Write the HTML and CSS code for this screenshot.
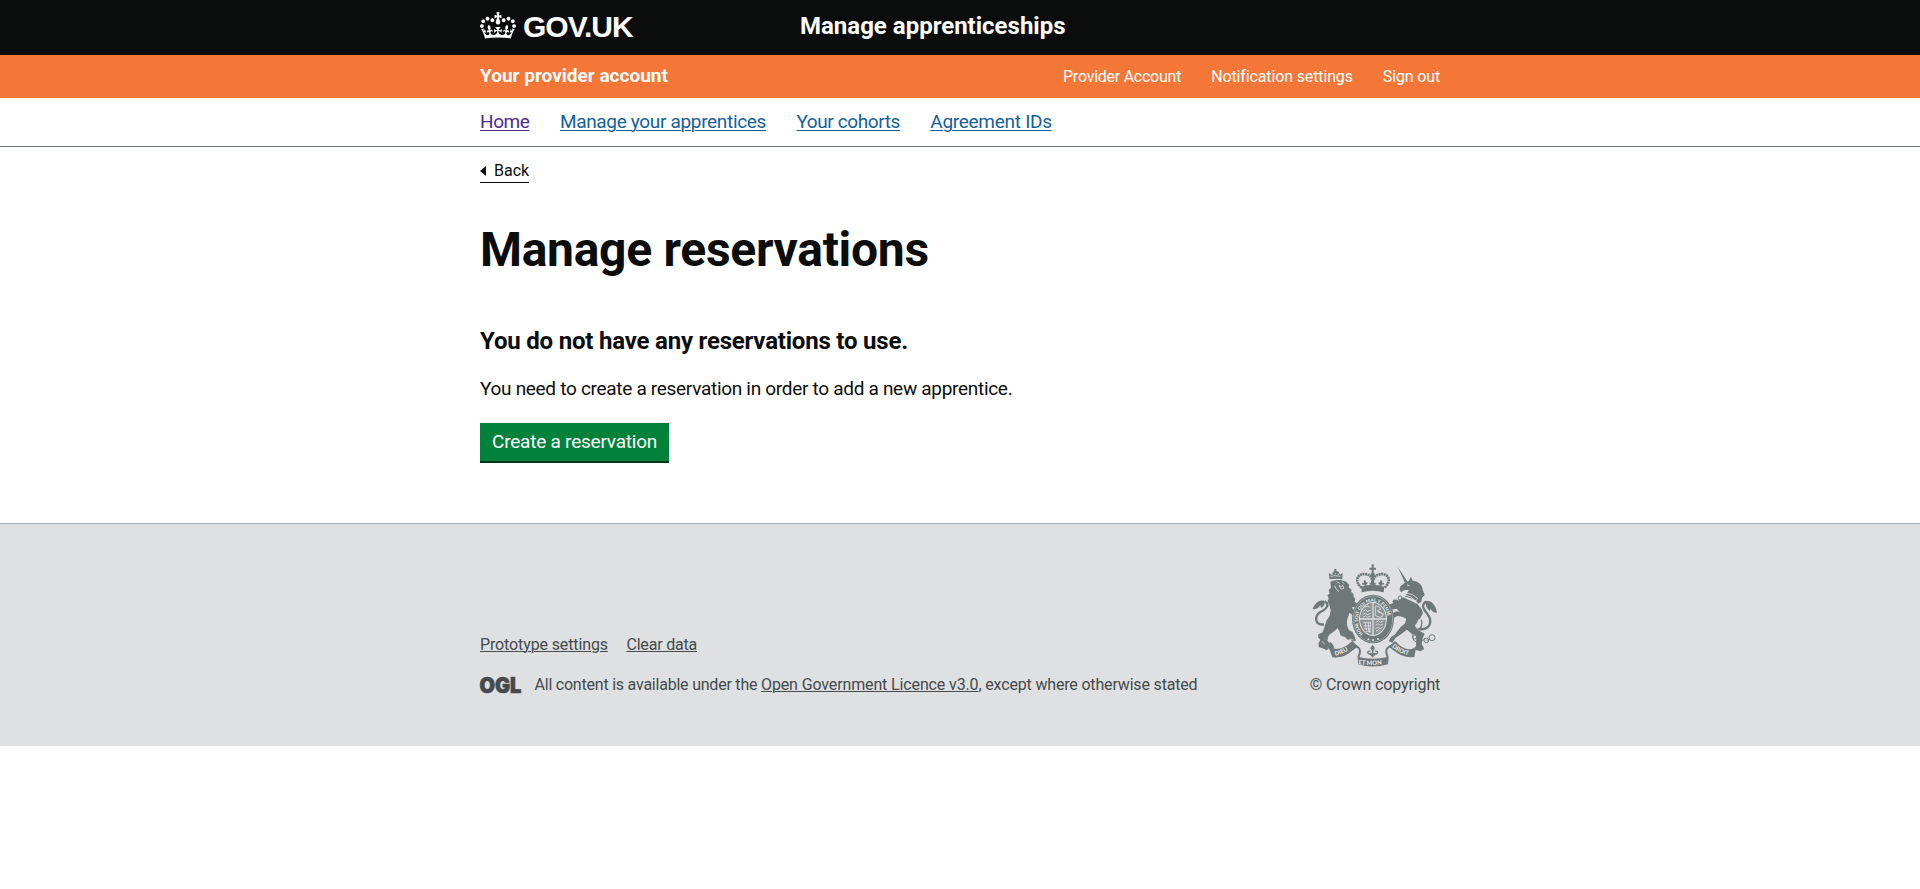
FILE: index.html
```
<!DOCTYPE html>
<html lang="en">
<head>
<meta charset="utf-8">
<title>Manage reservations</title>
<link rel="stylesheet" href="styles.css">
</head>
<body>
<header class="header">
  <div class="container header-row">
    <a class="logo" href="#">
      <svg class="crown" viewBox="0 0 132 97" aria-hidden="true"><path fill="#fff" d="M25 30.2c3.5 1.5 7.7-.2 9.1-3.7 1.5-3.6-.2-7.8-3.9-9.2-3.6-1.4-7.6.3-9.1 3.9-1.4 3.5.3 7.5 3.9 9zM9 39.5c3.6 1.5 7.8-.2 9.2-3.7 1.5-3.6-.2-7.8-3.9-9.1-3.6-1.5-7.6.2-9.1 3.8-1.4 3.5.3 7.5 3.8 9zM4.4 57.2c3.5 1.5 7.7-.2 9.1-3.8 1.5-3.6-.2-7.7-3.9-9.1-3.5-1.5-7.6.3-9.1 3.8-1.4 3.5.3 7.6 3.9 9.1zm38.3-21.4c3.5 1.5 7.7-.2 9.1-3.8 1.5-3.6-.2-7.7-3.9-9.1-3.6-1.5-7.6.3-9.1 3.8-1.3 3.6.4 7.7 3.9 9.1zm64.4-5.6c-3.6 1.5-7.8-.2-9.1-3.7-1.5-3.6.2-7.8 3.8-9.2 3.6-1.4 7.7.3 9.2 3.9 1.3 3.5-.4 7.5-3.9 9zm15.9 9.3c-3.6 1.5-7.7-.2-9.1-3.7-1.5-3.6.2-7.8 3.7-9.1 3.6-1.5 7.7.2 9.2 3.8 1.5 3.5-.3 7.5-3.8 9zm4.7 17.7c-3.6 1.5-7.8-.2-9.2-3.8-1.5-3.6.2-7.7 3.9-9.1 3.6-1.5 7.7.3 9.2 3.8 1.3 3.5-.4 7.6-3.9 9.1zM89.3 35.8c-3.6 1.5-7.8-.2-9.2-3.8-1.4-3.6.2-7.7 3.9-9.1 3.6-1.5 7.7.3 9.2 3.8 1.4 3.6-.3 7.7-3.9 9.1zM69.7 17.7l8.9 4.7V9.3l-8.9 2.8c-.2-.3-.5-.6-.9-.9L72.4 0H59.6l3.5 11.2c-.3.3-.6.5-.9.9l-8.8-2.8v13.1l8.8-4.7c.3.3.6.7.9.9l-5 15.4v.1c-.2.8-.4 1.6-.4 2.4 0 4.1 3.1 7.5 7 8.1h.2c.3 0 .7.1 1 .1.4 0 .7 0 1-.1h.2c4-.6 7.1-4.1 7.1-8.1 0-.8-.1-1.7-.4-2.4V34l-5.1-15.4c.4-.2.7-.6 1-.9zM66 92.8c16.9 0 32.8 1.1 47.1 3.2 4-16.9 8.9-26.7 14-33.5l-9.6-3.4c1 4.9 1.1 7.2 0 10.2-1.5-1.4-3-4.3-4.2-8.7L108.6 76c2.8-2 5-3.2 7.5-3.3-4.4 9.4-10 11.9-13.6 11.2-4.3-.8-6.3-4.6-5.6-7.9 1-4.7 5.7-5.9 8-.5 4.3-8.7-3-11.4-7.6-8.8 7.1-7.2 7.9-13.5 2.1-21.1-8 6.1-8.1 12.3-4.5 20.8-4.7-5.4-12.1-2.5-9.5 6.2 3.4-5.2 7.9-2 7.2 3.1-.6 4.3-6.4 7.8-13.5 7.2-10.3-.9-10.9-8-11.2-13.8 2.5-.5 7.1 1.8 11 7.3L80.2 60c-4.1 4.4-8 5.3-12.3 5.4 1.4-4.4 8-11.6 8-11.6H55.5s6.4 7.2 7.9 11.6c-4.2-.1-8-1-12.3-5.4l1.4 16.4c3.9-5.5 8.5-7.7 10.9-7.3-.3 5.8-.9 12.8-11.1 13.8-7.2.6-12.9-2.9-13.5-7.2-.7-5 3.8-8.3 7.1-3.1 2.7-8.7-4.6-11.6-9.4-6.2 3.7-8.5 3.6-14.7-4.6-20.8-5.8 7.6-5 13.9 2.2 21.1-4.7-2.6-11.9.1-7.7 8.8 2.3-5.5 7.1-4.2 8.1.5.7 3.3-1.3 7.1-5.7 7.9-3.5.7-9-1.8-13.5-11.2 2.5.1 4.7 1.3 7.5 3.3l-4.7-15.4c-1.2 4.4-2.7 7.2-4.3 8.7-1.1-3-.9-5.3 0-10.2l-9.5 3.4c5 6.9 9.9 16.7 14 33.5 14.8-2.1 30.8-3.2 47.7-3.2z"/></svg>
      <span class="logo-text">GOV.UK</span>
    </a>
    <a class="service-name" href="#">Manage apprenticeships</a>
  </div>
</header>

<div class="account-bar">
  <div class="container account-row">
    <a class="account-title" href="#">Your provider account</a>
    <nav class="account-links">
      <a class="provider-link" href="#">Provider Account</a>
      <a class="settings-link" href="#">Notification settings</a>
      <a class="signout-link" href="#">Sign out</a>
    </nav>
  </div>
</div>

<nav class="main-nav">
  <div class="container nav-row">
    <a class="nav-home visited" href="#">Home</a>
    <a class="nav-apprentices" href="#">Manage your apprentices</a>
    <a class="nav-cohorts" href="#">Your cohorts</a>
    <a class="nav-agreements" href="#">Agreement IDs</a>
  </div>
</nav>

<main class="container main">
  <a class="back" href="#"><svg class="back-arrow" viewBox="0 0 6 10" aria-hidden="true"><path fill="#0b0c0c" d="M0 5 6 0v10z"/></svg>Back</a>
  <h1 class="title">Manage reservations</h1>
  <h2 class="subtitle">You do not have any reservations to use.</h2>
  <p class="lead">You need to create a reservation in order to add a new apprentice.</p>
  <a class="button" href="#">Create a reservation</a>
</main>

<footer class="footer">
  <div class="container footer-row">
    <div class="footer-meta">
      <div class="footer-links">
        <a class="proto" href="#">Prototype settings</a>
        <a class="clear" href="#">Clear data</a>
      </div>
      <div class="licence">
        <svg class="ogl" viewBox="0 0 41 17" aria-hidden="true"><text class="ogl-text" x="-.6" y="16.1" textLength="42" lengthAdjust="spacingAndGlyphs">OGL</text></svg>
        <span class="licence-text"><span class="lic-a">All content is available under the </span><a class="lic-b" href="#">Open Government Licence v3.0</a><span class="lic-c">, except where otherwise stated</span></span>
      </div>
    </div>
    <div class="copyright">
      <svg class="crest" viewBox="33 38 384 312" aria-hidden="true">
        <defs>
          <path id="garter" d="M190 251A45 55 0 1 1 248 251"/>
          <path id="scroll-left" d="M106 316Q132 311 158 289"/>
          <path id="scroll-mid" d="M175 341Q218 348 266 339"/>
          <path id="scroll-right" d="M275 290Q303 313 337 317"/>
        </defs>
        <g class="ink">
          <!-- lion -->
          <path d="M89 86 86 68l9 5 4-9 8-3 9 3 4 9 8-6-1 20q-19-4-38 0z"/>
          <circle cx="106" cy="59" r="3.5"/>
          <path d="M91 94C105 88 125 87 139 94L148 104 146 111 155 118 153 124 161 131 160 138 166 146 164 154 172 160 166 171 156 170 159 177 175 184 182 192 178 200 160 196 149 187C144 200 139 210 141 224L146 238 158 246 164 258 168 271 157 274 151 267 143 268 135 260 122 256 117 240 112 234C104 242 96 248 89 252L83 262 84 272 95 278 103 290 98 297 88 293 80 300 68 294 57 291 55 280 61 268 54 261 55 252 68 246 74 228 80 210 89 197 92 180 88 163 83 153 86 145 82 135 89 130 86 118 93 113z"/>
          <!-- unicorn -->
          <path d="m293 49 30 46-8 3z"/>
          <path d="M301 108 315 97 326 92 333 79 338 91C352 92 367 101 368 118L374 134 366 143 364 155 354 160 347 150C339 145 326 141 315 139L327 118 312 120 303 126 299 118z"/>
          <path d="M310 141 352 161C359 171 370 178 368 190L360 205 350 211 345 227 354 239 374 250 368 264 365 281 373 296 361 303 347 298 349 275 349 255 335 250 321 238 307 249 287 262 277 277 266 272 273 260 284 253 300 232 315 219 319 206 307 199 292 197 280 204 272 195 287 183 299 185 290 175 274 178 265 169 272 161 290 154z"/>
          <path d="M281 147l12 4 8 20-10-2-14-15z"/>
          <!-- scroll ribbons -->
          <path d="M85 288Q116 310 157 272L174 289 158 300Q133 325 97 321z"/>
          <path d="M349 288Q322 312 285 272L266 289 281 300Q306 324 343 320z"/>
          <path d="M173 319Q218 331 266 319L264 342Q218 355 174 342z"/>
        </g>
        <g class="line">
          <path class="tail" d="M72 222C44 226 42 198 61 185 86 174 87 159 74 153"/>
          <path d="M74 152C66 147 45 153 38 176 49 178 57 172 61 165l3 8q12-8 10-21z" class="ink"/>
          <path class="tail" d="M356 236c22 4 38-8 34-30-3-14-21-26-21-39q2-10 10-13"/>
          <path d="M378 153c14-5 29 9 33 34-11 1-16-6-19-12l-2 8q-16-13-12-30z" class="ink"/>
          <path d="M346 222c10-10 4-22 12-32M352 236c15 2 14-17 12-28" class="mid"/>
          <path d="M339 251q-4 18 10 24 16 3 26-10m5 5 8-2"/>
          <circle cx="344" cy="260" r="6"/><circle cx="355" cy="274" r="6"/><circle cx="379" cy="270" r="7"/><circle cx="396" cy="262" r="9"/>
          <circle cx="300" cy="143" r="6"/><circle cx="289" cy="155" r="6"/>
          <path d="M158 298q2-19 13-9 16 8 4 31M282 300q-4-19-14-11-16 8-5 31" class="thick"/>
          <!-- lily under the shield -->
          <path d="M218 290v29m-11-9h22m-18-7q-12-2-6 7 7 0 13 9 6-9 13-9 5-9-6-7" class="mid"/>
          <path d="M218 283l7 10-7 12-7-12z" class="ink"/>
        </g>
        <!-- crown above the shield -->
        <g class="line">
          <path d="M185 112c-25-20-11-46 14-40 14 2 20 14 18 31 1-17 8-29 22-31 25-6 39 20 14 40M218 75v30" class="dots"/>
          <path d="M184 109q34-12 69 0l-2 17q-33-10-66 0z" class="ink"/>
          <path d="M197 107l-3-17m8 8-15 3m31-8v14m-9-7h18m14 7 3-17m-8 8 15 3" class="thick"/>
          <path d="M218 42v28m-10-15h20" class="thick"/>
          <circle class="ink" cx="218" cy="74" r="7"/>
        </g>
        <!-- garter and shield -->
        <ellipse class="ink" cx="219" cy="206" rx="63" ry="73"/>
        <ellipse class="ring" cx="219" cy="206" rx="59" ry="69"/>
        <ellipse class="plate" cx="219" cy="206" rx="42" ry="51"/>
        <ellipse class="shield" cx="219" cy="206" rx="39" ry="48"/>
        <path class="quarter" d="M219 157v98M179 206h80"/>
        <g class="detail">
          <path d="M188 184l9-6 5 5 11-4m-25 14 8-5 5 5 11-4m-23 12 8-5 5 5 10-4M194 171l9-4 8 4M190 217l22 1m-21 8 22 1m-20 8 20 1m-16 7h16m-18-29 4 25m6-26 1 31m6-31-3 35"/>
          <path d="M226 168h10l6 8-9 5 11 6 5 10-10 4-14-6 2-10zM232 183l20 9M227 216l9-5 5 5 9-4m-24 13 9-5 5 5 9-4m-23 14 9-5 5 5 8-5m-20 13 8-5 6 4"/>
          <!-- collar, mane and claw highlights -->
          <path d="M315 134q18 2 31 18l6-5M319 128q19 1 35 17M321 104l8 2M109 94l10 5m8-4 5 4m-15 7q7 4 12 0l2 8-8 2zM104 106l5 11 8 7M92 78q14-4 29 0M97 70v4m9-6v4m9-2v4"/>
          <path d="M81 268l8 10m-23-5 8 9m86-12-9-5m140-64 18 6"/>
        </g>
        <circle class="gap" cx="205" cy="267" r="3"/><circle class="gap" cx="219" cy="269" r="3"/><circle class="gap" cx="234" cy="266" r="3"/>
        <g class="motto">
          <text class="garter-text"><textPath href="#garter">HONI SOIT QUI MAL Y PENSE</textPath></text>
          <text><textPath href="#scroll-left">DIEU</textPath></text>
          <text><textPath href="#scroll-mid">ET MON</textPath></text>
          <text><textPath href="#scroll-right">DROIT</textPath></text>
        </g>
      </svg>
      <a class="copyright-text" href="#">© Crown copyright</a>
    </div>
  </div>
</footer>
</body>
</html>
```
FILE: styles.css
```
* { box-sizing: border-box; }
body {
  margin: 0;
  background: #fff;
  color: #0b0c0c;
  font: 400 19px/25px Roboto, "Liberation Sans", sans-serif;
}
.container { width: 960px; margin: 0 auto; }

.header { height: 55px; background: #0b0c0c; }
.header a { color: #fff; text-decoration: none; }
.header-row { display: flex; align-items: flex-start; padding-top: 11px; }
.logo { display: flex; width: 320px; gap: 7px; }
.crown { width: 36px; height: 27px; margin-top: .5px; }
.logo-text { font: 700 30px/31px "Liberation Sans", Arial, sans-serif; letter-spacing: -1px; }
.service-name { font-size: 24px; font-weight: 700; line-height: 30px; }

.account-bar { height: 43px; padding-top: 8px; background: #f47738; }
.account-bar a { color: #fff; text-decoration: none; }
.account-row { display: flex; justify-content: space-between; align-items: baseline; }
.account-title { font-weight: 700; }
.account-links { display: flex; gap: 30px; font-size: 16px; }
.provider-link { letter-spacing: -.25px; }
.settings-link { letter-spacing: -.13px; }
.signout-link { letter-spacing: -.15px; }

.main-nav { height: 49px; padding-top: 11px; border-bottom: 1px solid #6f7777; }
.nav-row { display: flex; gap: 30.4px; }
.nav-row a { color: #135f9c; text-underline-offset: 2px; text-decoration-thickness: 1px; }
.nav-row .visited { color: #4c2c92; }
.nav-home { letter-spacing: -.4px; }
.nav-apprentices { letter-spacing: -.33px; }
.nav-cohorts { letter-spacing: -.4px; }
.nav-agreements { letter-spacing: -.28px; }

.main { height: 376px; padding-top: 13px; }
.back {
  display: flex;
  align-items: center;
  gap: 8px;
  width: 49px;
  height: 23px;
  padding-bottom: 1px;
  border-bottom: 1px solid #0b0c0c;
  color: #0b0c0c;
  font-size: 16px;
  line-height: 20px;
  text-decoration: none;
}
.back-arrow { width: 6px; height: 10px; flex: none; }
.title { margin: 42px 0 51px; font-size: 48px; line-height: 50px; letter-spacing: -.3px; }
.subtitle { margin: 0 0 20px; font-size: 24px; line-height: 30px; letter-spacing: -.2px; }
.lead { margin: 0 0 22px; letter-spacing: -.3px; }
.button {
  display: block;
  width: 189px;
  height: 38px;
  padding: 6px 0 7px 12px;
  background: #00823b;
  box-shadow: 0 2px 0 #003618;
  color: #fff;
  letter-spacing: -.22px;
  text-decoration: none;
}

.footer {
  height: 223px;
  padding-top: 39px;
  border-top: 1px solid #a1acb2;
  background: #dee0e2;
  color: #454a4c;
  font-size: 16px;
  line-height: 20px;
}
.footer a { color: #454a4c; text-underline-offset: 1px; text-decoration-thickness: 1px; }
.footer-row { display: flex; justify-content: space-between; align-items: flex-end; }
.footer-links { display: flex; gap: 18.5px; margin-bottom: 20px; }
.proto { letter-spacing: -.12px; }
.clear { letter-spacing: -.2px; }
.licence { display: flex; align-items: center; gap: 13.5px; }
.ogl { width: 41px; height: 17px; overflow: visible; }
.ogl-text { font: 900 21.5px Inter, sans-serif; fill: #454a4c; stroke: #454a4c; stroke-width: .7px; }
.lic-a { letter-spacing: -.22px; }
.lic-b { letter-spacing: -.13px; }
.lic-c { letter-spacing: -.17px; }
.copyright { display: flex; flex-direction: column; align-items: center; width: 130px; }
.crest { width: 128px; height: 104px; margin-bottom: 8px; }
.footer .copyright-text { letter-spacing: -.12px; text-decoration: none; white-space: nowrap; }

.ink, .line .ink { fill: #6f7879; stroke: none; }
.line { fill: none; stroke: #6f7879; stroke-width: 3; }
.thick { stroke-width: 6; }
.tail { stroke-width: 7; }
.mid { stroke-width: 4; }
.dots { stroke-width: 8; stroke-dasharray: 6 1.5; }
.ring { fill: none; stroke: #c5caca; stroke-width: 1.5; }
.plate, .gap { fill: #dee0e2; }
.shield { fill: #8b9394; }
.quarter { stroke: #dee0e2; stroke-width: 4; }
.detail { fill: none; stroke: #dee0e2; stroke-width: 2.5; }
.motto { fill: #eef0f0; font: 700 18px Lato, sans-serif; }
.garter-text { font-size: 14px; }
```
